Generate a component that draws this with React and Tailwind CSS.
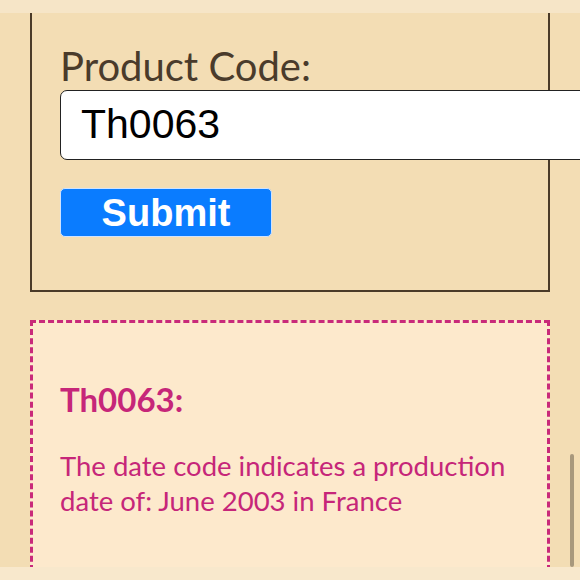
export default function App() {
  return (
    <div className="relative w-[580px] h-[580px] overflow-hidden flex flex-col bg-[#f3ddb4] font-['Lato',sans-serif]">
      <div className="h-[13px] bg-[#f6e5c7] shrink-0" />

      <div className="flex-1 pl-[30px] pr-[30px]">
        <div className="w-[520px] h-[279px] border-x-2 border-b-2 border-[#4a3a28] pl-[28px] pt-[30px]">
          <label className="block text-[40px] leading-[46px] text-[#4a3b2b]">Product Code:</label>
          <div className="w-[560px] h-[70px] bg-white border border-[#222] rounded-[7px] flex items-center pl-[20px] mt-[1px]">
            <span className="text-[41px] text-black font-['Liberation_Sans',sans-serif]">Th0063</span>
          </div>
          <button className="mt-[28px] w-[212px] h-[49px] rounded-[5px] bg-[#0a7cff] border border-[#cfe3ff] text-white font-bold text-[38px] leading-none font-['Liberation_Sans',sans-serif] flex items-center justify-center">
            Submit
          </button>
        </div>

        <div className="mt-[28px] w-[520px] h-[260px] border-[3px] border-dashed border-[#c92a7a] bg-[#fde9cc] pl-[27px] pt-[56px] text-[#c62679]">
          <h2 className="text-[33px] font-bold leading-[40px]">Th0063:</h2>
          <p className="mt-[29px] text-[27.5px] leading-[35px] w-[470px]">
            The date code indicates a production date of: June 2003 in France
          </p>
        </div>
      </div>

      <div className="absolute left-0 bottom-0 w-full h-[13px] bg-[#f8e8cc]" />
      <div className="absolute right-[6px] top-[454px] w-[4px] h-[113px] rounded-full bg-[#a8987c]" />
    </div>
  )
}
